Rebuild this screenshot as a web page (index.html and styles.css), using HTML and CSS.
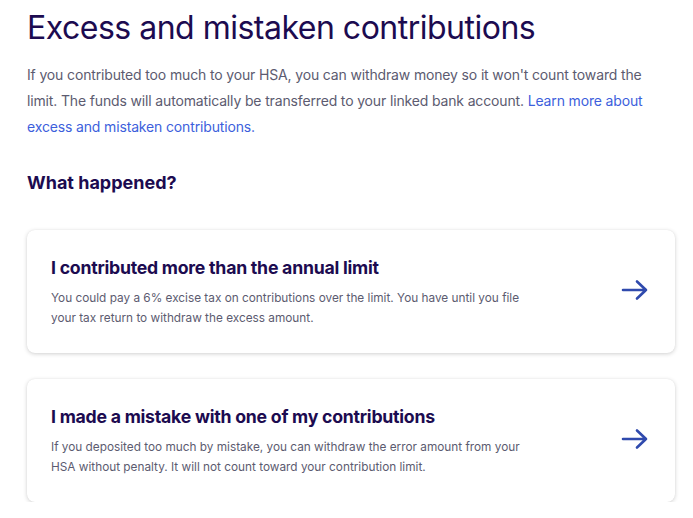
FILE: index.html
```html
<!DOCTYPE html>
<html lang="en">
<head>
<meta charset="utf-8">
<title>Excess and mistaken contributions</title>
<link rel="stylesheet" href="styles.css">
</head>
<body>
<main class="page">
  <h1 class="title">Excess and mistaken contributions</h1>
  <p class="intro">If you contributed too much to your HSA, you can withdraw money so it won't count toward the limit. The funds will automatically be transferred to your linked bank account. <a class="link" href="#">Learn more about excess and mistaken contributions.</a></p>
  <h2 class="subtitle">What happened?</h2>
  <div class="cards">
    <a class="card" href="#">
      <div class="card-body">
        <h3 class="card-title">I contributed more than the annual limit</h3>
        <p class="card-text">You could pay a 6% excise tax on contributions over the limit. You have until you file your tax return to withdraw the excess amount.</p>
      </div>
      <svg class="arrow" width="28" height="22" viewBox="0 0 28 22" aria-hidden="true"><path d="M2 11H25M16 2.5L25 11L16 19.5" fill="none" stroke="#2f4aad" stroke-width="2.6" stroke-linecap="round" stroke-linejoin="round"/></svg>
    </a>
    <a class="card" href="#">
      <div class="card-body">
        <h3 class="card-title">I made a mistake with one of my contributions</h3>
        <p class="card-text">If you deposited too much by mistake, you can withdraw the error amount from your HSA without penalty. It will not count toward your contribution limit.</p>
      </div>
      <svg class="arrow" width="28" height="22" viewBox="0 0 28 22" aria-hidden="true"><path d="M2 11H25M16 2.5L25 11L16 19.5" fill="none" stroke="#2f4aad" stroke-width="2.6" stroke-linecap="round" stroke-linejoin="round"/></svg>
    </a>
  </div>
</main>
</body>
</html>
```
FILE: styles.css
```css
* { box-sizing: border-box; }
html, body { margin: 0; padding: 0; background: #ffffff; }
body { font-family: Inter, "Noto Sans", Arial, sans-serif; color: #1c0b50; }
.page { padding: 8px 18px 0 27px; }
.title {
  margin: 0;
  font-size: 32px;
  line-height: 40px;
  font-weight: 400;
  letter-spacing: -0.5px;
  color: #1c0b50;
}
.intro {
  margin: 14px 0 0;
  font-size: 14px;
  line-height: 26px;
  letter-spacing: -0.15px;
  color: #5c5b70;
  max-width: 630px;
}
.link { color: #3d5fdc; text-decoration: none; }
.subtitle {
  margin: 31px 0 0;
  font-size: 18px;
  line-height: 24px;
  font-weight: 700;
  color: #1c0b50;
}
.cards {
  margin-top: 35px;
  display: flex;
  flex-direction: column;
  gap: 26px;
}
.card {
  display: flex;
  align-items: center;
  justify-content: space-between;
  height: 123px;
  padding: 0 26px 0 24px;
  background: #fff;
  border-radius: 8px;
  box-shadow: 0 1px 4px rgba(0,0,0,0.18), 0 0 1px rgba(0,0,0,0.08);
  text-decoration: none;
}
.card-title {
  margin: 0;
  font-size: 17.7px;
  line-height: 24px;
  font-weight: 700;
  color: #1c0b50;
  letter-spacing: -0.25px;
}
.card-text {
  margin: 8px 0 0;
  font-size: 11.8px;
  line-height: 20px;
  color: #5c5b70;
  max-width: 490px;
}
.arrow { flex: none; margin-bottom: 4px; }
```
